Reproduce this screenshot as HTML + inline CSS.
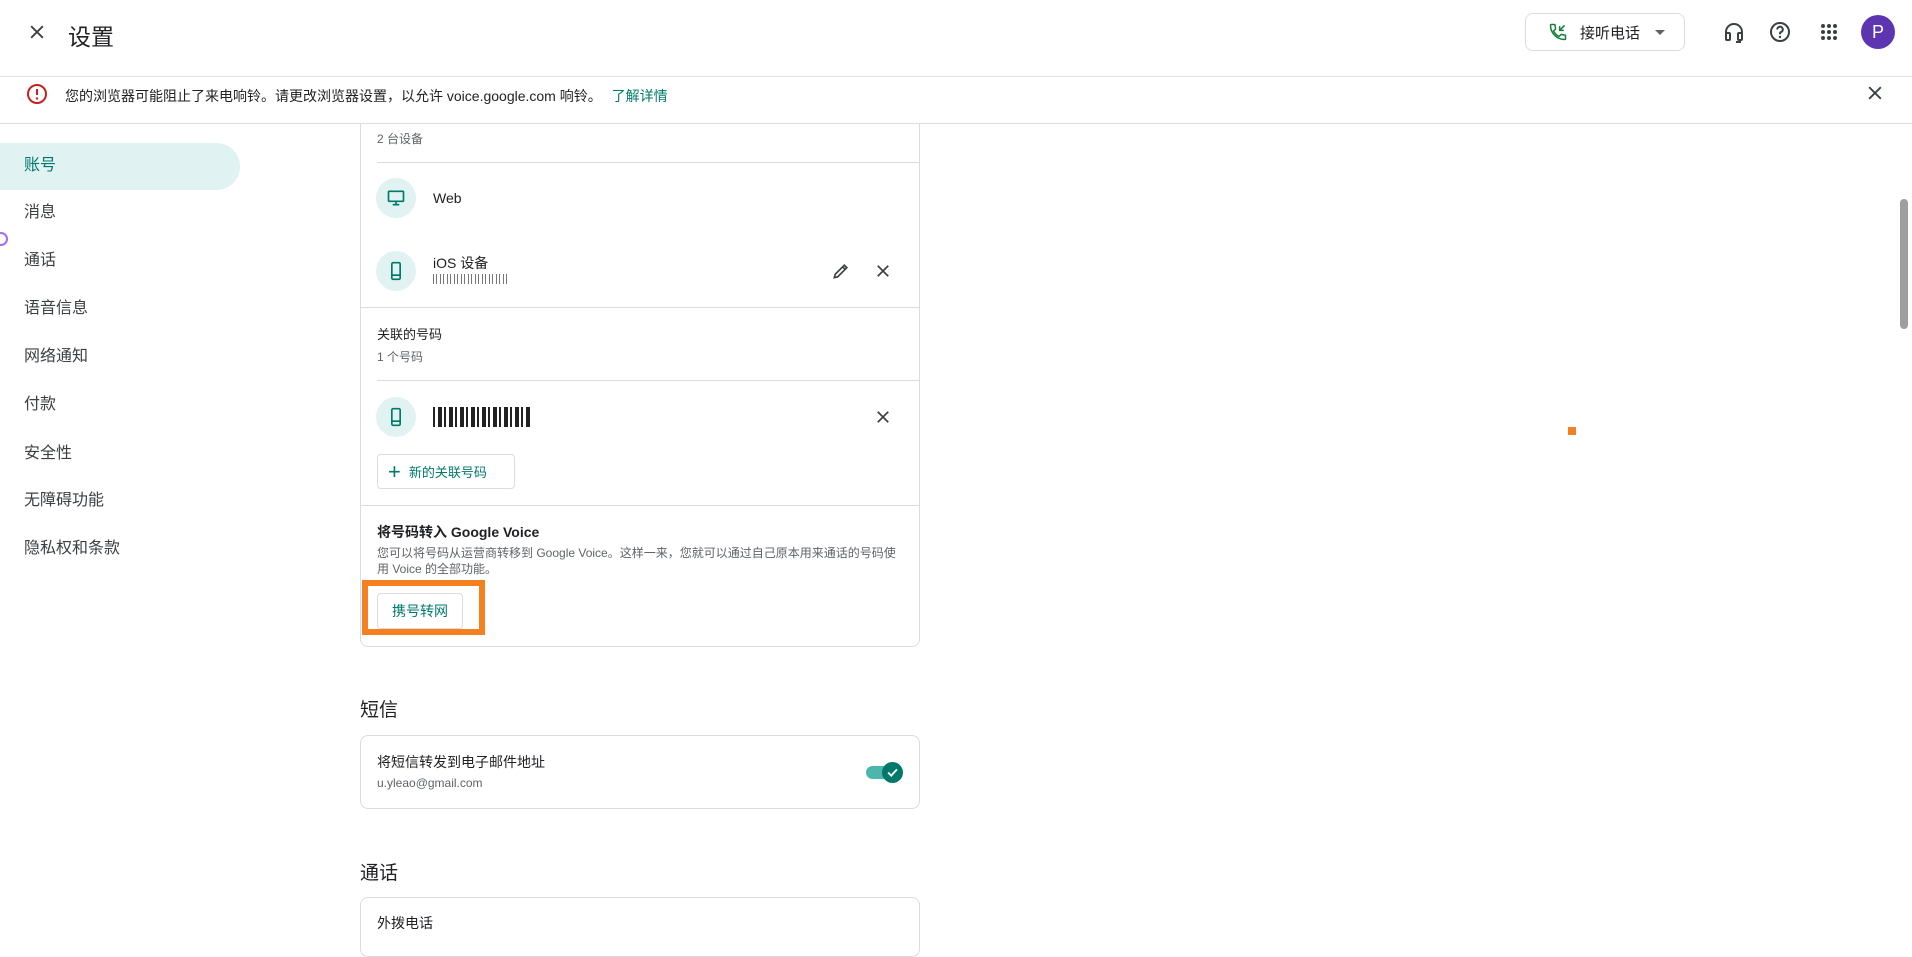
<!DOCTYPE html>
<html><head><meta charset="utf-8"><style>
*{box-sizing:border-box;margin:0;padding:0}
body{width:1912px;height:928px;overflow:hidden;background:#fff;font-family:"Liberation Sans","Noto Sans CJK SC",sans-serif;color:#202124;position:relative}
.a{position:absolute}
.hdr{left:0;top:0;width:1912px;height:77px;border-bottom:1px solid #e0e0e0}
.ban{left:0;top:77px;width:1912px;height:47px;border-bottom:1px solid #dadce0;background:#fff}
.nav{left:24px;font-size:16px;color:#3c4043;line-height:20px}
.card{border:1px solid #dadce0;border-radius:8px;background:#fff}
.sm{font-size:12px;color:#5f6368}
.md{font-size:14px;color:#202124}
.circ{width:40px;height:40px;border-radius:50%;background:#e0f2f1;display:flex;align-items:center;justify-content:center}
.hr{height:1px;background:#dadce0}
.btn{border:1px solid #dadce0;border-radius:4px;color:#00796b;font-size:14px;display:flex;align-items:center}
</style></head><body>
<div class="a hdr"></div>
<svg class="a" style="left:27px;top:22px" width="20" height="20" viewBox="0 0 24 24"><path d="M5 5L19 19M19 5L5 19" stroke="#3c4043" stroke-width="2.2"/></svg>
<div class="a" style="left:68px;top:18px;font-size:23px;color:#202124">设置</div>
<div class="a" style="left:1525px;top:13px;width:160px;height:38px;border:1px solid #dadce0;border-radius:8px"></div>
<svg class="a" style="left:1548px;top:22px" width="20" height="20" viewBox="0 0 24 24"><path d="M6.6 10.8c1.4 2.8 3.8 5.1 6.6 6.6l2.2-2.2c.3-.3.7-.4 1-.2 1.1.4 2.300.6 3.6.6.6 0 1 .4 1 1V20c0 .6-.4 1-1 1C10.6 21 3 13.4 3 4c0-.6.4-1 1-1h3.5c.6 0 1 .4 1 1 0 1.3.2 2.5.6 3.6.1.3 0 .7-.2 1z" fill="none" stroke="#188038" stroke-width="1.8"/><path d="M20 4l-6 6M14 5v5h5" fill="none" stroke="#188038" stroke-width="1.8"/></svg>
<div class="a" style="left:1580px;top:22px;font-size:15px;color:#202124">接听电话</div>
<div class="a" style="left:1655px;top:30px;width:0;height:0;border-left:5px solid transparent;border-right:5px solid transparent;border-top:5px solid #5f6368"></div>
<svg class="a" style="left:1722px;top:20px" width="24" height="24" viewBox="0 0 24 24"><path d="M4 18v-6a8 8 0 0 1 16 0v6" fill="none" stroke="#3c4043" stroke-width="2"/><rect x="4" y="13" width="4" height="7" rx="1" fill="none" stroke="#3c4043" stroke-width="2"/><rect x="16" y="13" width="4" height="7" rx="1" fill="none" stroke="#3c4043" stroke-width="2"/><path d="M18 20v2h-4" stroke="#3c4043" stroke-width="2" fill="none"/></svg>
<svg class="a" style="left:1768px;top:20px" width="24" height="24" viewBox="0 0 24 24"><circle cx="12" cy="12" r="9" fill="none" stroke="#3c4043" stroke-width="2"/><path d="M9.2 9.5a2.8 2.8 0 1 1 3.8 2.6c-.7.3-1 .8-1 1.6v.6" fill="none" stroke="#3c4043" stroke-width="2"/><circle cx="12" cy="17" r="1.2" fill="#3c4043"/></svg>
<svg class="a" style="left:1820px;top:23px" width="18" height="18" viewBox="0 0 18 18" fill="#3c4043"><circle cx="3" cy="3" r="2"/><circle cx="9" cy="3" r="2"/><circle cx="15" cy="3" r="2"/><circle cx="3" cy="9" r="2"/><circle cx="9" cy="9" r="2"/><circle cx="15" cy="9" r="2"/><circle cx="3" cy="15" r="2"/><circle cx="9" cy="15" r="2"/><circle cx="15" cy="15" r="2"/></svg>
<div class="a" style="left:1861px;top:15px;width:34px;height:34px;border-radius:50%;background:#5e35b1;color:#fff;font-size:18px;text-align:center;line-height:34px">P</div>
<div class="a card" style="left:360px;top:110px;width:560px;height:537px;border-top:none;border-radius:0 0 8px 8px"></div>
<div class="a ban"></div>
<svg class="a" style="left:25px;top:82px" width="24" height="24" viewBox="0 0 24 24"><circle cx="12" cy="12" r="9" fill="none" stroke="#c5221f" stroke-width="2"/><path d="M12 7v6" stroke="#c5221f" stroke-width="2"/><circle cx="12" cy="16.5" r="1.2" fill="#c5221f"/></svg>
<div class="a" style="left:65px;top:86px;font-size:14px;color:#202124">您的浏览器可能阻止了来电响铃。请更改浏览器设置，以允许 voice.google.com 响铃。 <span style="color:#00796b;margin-left:6px">了解详情</span></div>
<svg class="a" style="left:1865px;top:83px" width="20" height="20" viewBox="0 0 24 24"><path d="M5 5L19 19M19 5L5 19" stroke="#3c4043" stroke-width="2.2"/></svg>
<div class="a" style="left:0;top:143px;width:240px;height:47px;background:#e0f2f1;border-radius:0 24px 24px 0"></div>
<div class="a nav" style="top:156px;color:#00796b">账号</div>
<div class="a nav" style="top:203px">消息</div>
<div class="a nav" style="top:251px">通话</div>
<div class="a nav" style="top:299px">语音信息</div>
<div class="a nav" style="top:347px">网络通知</div>
<div class="a nav" style="top:395px">付款</div>
<div class="a nav" style="top:444px">安全性</div>
<div class="a nav" style="top:491px">无障碍功能</div>
<div class="a nav" style="top:539px">隐私权和条款</div>
<div class="a" style="left:-6px;top:232px;width:14px;height:14px;border:2px solid #a56cf0;border-radius:50%"></div>
<div class="a sm" style="left:377px;top:130px">2 台设备</div>
<div class="a hr" style="left:377px;top:162px;width:542px"></div>
<div class="a circ" style="left:376px;top:178px"><svg width="20" height="20" viewBox="0 0 24 24"><rect x="3" y="4" width="18" height="12" rx="1" fill="none" stroke="#00796b" stroke-width="2"/><path d="M12 16v4M8 20h8" stroke="#00796b" stroke-width="2"/></svg></div>
<div class="a md" style="left:433px;top:190px">Web</div>
<div class="a circ" style="left:376px;top:251px"><svg width="20" height="20" viewBox="0 0 24 24"><rect x="7" y="2" width="10" height="20" rx="1.5" fill="none" stroke="#00796b" stroke-width="2"/><path d="M7 17h10" stroke="#00796b" stroke-width="2"/></svg></div>
<div class="a md" style="left:433px;top:253px">iOS 设备</div>
<div class="a" style="left:433px;top:274px;width:76px;height:10px;background:repeating-linear-gradient(90deg,#777 0 1px,transparent 1px 3px,#777 3px 4px,transparent 4px 7px)"></div>
<svg class="a" style="left:831px;top:261px" width="20" height="20" viewBox="0 0 24 24"><path d="M4 20l1-4L16 5l3 3L8 19z M14 7l3 3" fill="none" stroke="#3c4043" stroke-width="2"/></svg>
<svg class="a" style="left:874px;top:262px" width="18" height="18" viewBox="0 0 24 24"><path d="M5 5L19 19M19 5L5 19" stroke="#3c4043" stroke-width="2.2"/></svg>
<div class="a hr" style="left:361px;top:307px;width:558px"></div>
<div class="a md" style="left:377px;top:324px;font-size:13px">关联的号码</div>
<div class="a sm" style="left:377px;top:348px">1 个号码</div>
<div class="a hr" style="left:377px;top:380px;width:542px"></div>
<div class="a circ" style="left:376px;top:397px"><svg width="20" height="20" viewBox="0 0 24 24"><rect x="7" y="2" width="10" height="20" rx="1.5" fill="none" stroke="#00796b" stroke-width="2"/><path d="M7 17h10" stroke="#00796b" stroke-width="2"/></svg></div>
<div class="a" style="left:433px;top:407px;width:98px;height:20px;background:repeating-linear-gradient(90deg,#222 0 2px,transparent 2px 5px,#222 5px 9px,transparent 9px 11px)"></div>
<svg class="a" style="left:874px;top:408px" width="18" height="18" viewBox="0 0 24 24"><path d="M5 5L19 19M19 5L5 19" stroke="#3c4043" stroke-width="2.2"/></svg>
<div class="a btn" style="left:377px;top:454px;width:138px;height:35px;padding-left:10px"><span style="font-size:22px;margin-right:8px;font-weight:300">+</span><span style="font-size:13px">新的关联号码</span></div>
<div class="a hr" style="left:361px;top:505px;width:558px"></div>
<div class="a md" style="left:377px;top:522px;font-weight:bold;font-size:14px">将号码转入 Google Voice</div>
<div class="a sm" style="left:377px;top:545px;line-height:16px;width:520px">您可以将号码从运营商转移到 Google Voice。这样一来，您就可以通过自己原本用来通话的号码使用 Voice 的全部功能。</div>
<div class="a btn" style="left:377px;top:593px;width:86px;height:36px;justify-content:center;font-size:14px">携号转网</div>
<div class="a" style="left:362px;top:580px;width:123px;height:55px;border:6px solid #f5801f"></div>
<div class="a" style="left:360px;top:695px;font-size:19px">短信</div>
<div class="a card" style="left:360px;top:735px;width:560px;height:74px"></div>
<div class="a md" style="left:377px;top:752px">将短信转发到电子邮件地址</div>
<div class="a sm" style="left:377px;top:776px">u.yleao@gmail.com</div>
<div class="a" style="left:866px;top:766px;width:32px;height:13px;border-radius:7px;background:#4db6ac"></div>
<div class="a" style="left:882px;top:762px;width:21px;height:21px;border-radius:50%;background:#00796b"></div>
<svg class="a" style="left:885px;top:765px" width="15" height="15" viewBox="0 0 24 24"><path d="M5 12l5 5 9-10" fill="none" stroke="#fff" stroke-width="3"/></svg>
<div class="a" style="left:360px;top:858px;font-size:19px">通话</div>
<div class="a card" style="left:360px;top:897px;width:560px;height:60px"></div>
<div class="a md" style="left:377px;top:913px">外拨电话</div>
<div class="a" style="left:1568px;top:427px;width:8px;height:8px;background:#f5801f"></div>
<div class="a" style="left:1900px;top:199px;width:8px;height:130px;border-radius:4px;background:#9e9e9e"></div>
</body></html>
